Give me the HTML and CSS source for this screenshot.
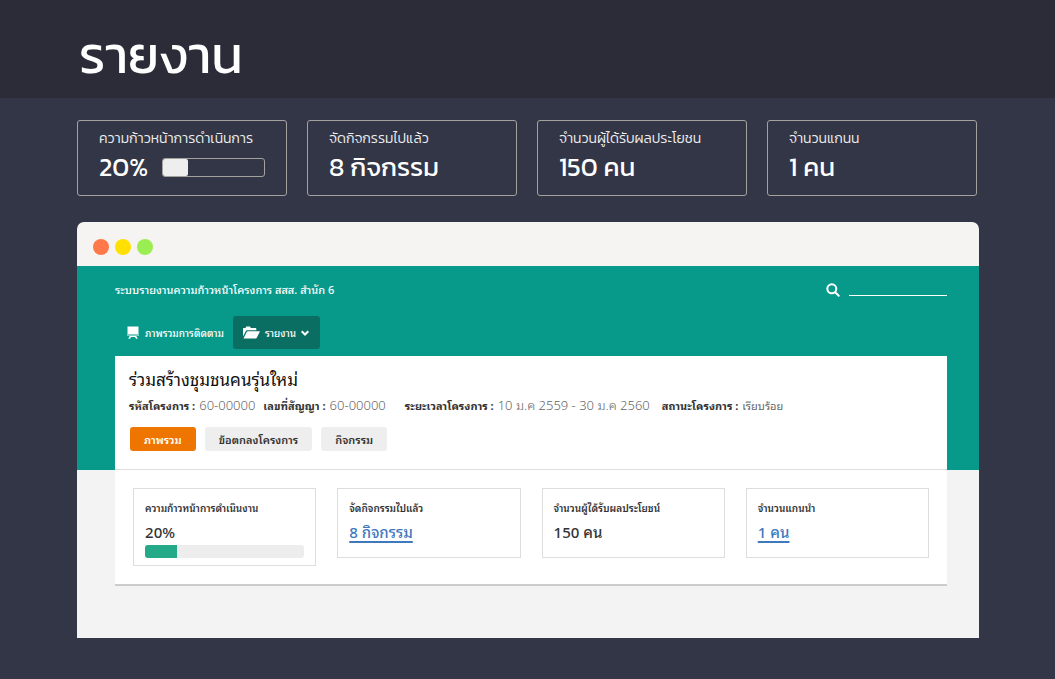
FILE: index.html
```html
<!DOCTYPE html>
<html lang="th">
<head>
<meta charset="utf-8">
<meta name="viewport" content="width=device-width, initial-scale=1">
<title>รายงาน</title>
<link rel="stylesheet" href="styles.css">
</head>
<body>
<header class="page-header"><h1 class="page-title">รายงาน</h1></header>
<main class="page-main">
  <section class="stats">
    <article class="stat">
      <h2 class="stat-label">ความก้าวหน้าการดำเนินการ</h2>
      <div class="stat-row">
        <p class="stat-value">20%</p>
        <div class="meter" role="progressbar" aria-label="ความก้าวหน้า" aria-valuenow="20" aria-valuemin="0" aria-valuemax="100"><div class="meter-fill"></div></div>
      </div>
    </article>
    <article class="stat">
      <h2 class="stat-label">จัดกิจกรรมไปแล้ว</h2>
      <p class="stat-value">8 กิจกรรม</p>
    </article>
    <article class="stat">
      <h2 class="stat-label">จำนวนผู้ได้รับผลประโยชน</h2>
      <p class="stat-value">150 คน</p>
    </article>
    <article class="stat">
      <h2 class="stat-label">จำนวนแกนน</h2>
      <p class="stat-value">1 คน</p>
    </article>
  </section>

  <section class="window">
    <div class="window-bar">
      <span class="dot dot-red"></span><span class="dot dot-yellow"></span><span class="dot dot-green"></span>
    </div>
    <div class="app-top">
      <div class="app-bar">
        <p class="app-name">ระบบรายงานความก้าวหน้าโครงการ สสส. สำนัก 6</p>
        <label class="search">
          <svg class="search-icon" viewBox="0 0 14 14" aria-hidden="true"><circle cx="5.8" cy="5.8" r="4.5"/><path d="M9.2 9.2 12.7 12.7"/></svg>
          <input class="search-input" type="search" aria-label="ค้นหา">
        </label>
      </div>
      <nav class="nav">
        <a class="nav-link" href="#">
          <svg class="icon-board" viewBox="0 0 12 13" aria-hidden="true"><path d="M.5 .5h11v7.500H.5zM0 8.600h12v1H0zM2.500 10h7v1h-7zM2.500 10.500H4.300L3 12.800H1.200zM7.700 10.500h1.800l1.300 2.300H9z"/></svg>
          <span>ภาพรวมการติดตาม</span>
        </a>
        <button class="nav-button" type="button">
          <svg class="icon-folder" viewBox="0 0 17 13" aria-hidden="true"><path d="M0 10.500V2.800Q0 2 .8 2H2.500L3.300.6H7L7.800 2h4.700q.8 0 .8.8v1.400H4.200Q3.300 4.200 2.900 5zM.5 12.500 3.700 5.900Q4 5.200 4.800 5.200H17l-3.200 6.500q-.4.8-1.200.8z"/></svg>
          <span>รายงาน</span>
          <svg class="icon-chevron" viewBox="0 0 8 6" aria-hidden="true"><path d="M.7 1.200 4 4.500 7.300 1.200"/></svg>
        </button>
      </nav>
      <div class="project-head">
        <h2 class="project-title">ร่วมสร้างชุมชนคนรุ่นใหม่</h2>
        <dl class="meta">
          <div class="meta-item"><dt>รหัสโครงการ :</dt><dd>60-00000</dd></div>
          <div class="meta-item meta-wide"><dt>เลขที่สัญญา :</dt><dd>60-00000</dd></div>
          <div class="meta-item"><dt>ระยะเวลาโครงการ :</dt><dd>10 ม.ค 2559 - 30 ม.ค 2560</dd></div>
          <div class="meta-item meta-status"><dt>สถานะโครงการ :</dt><dd>เรียบร้อย</dd></div>
        </dl>
        <div class="tabs">
          <button class="tab tab-active" type="button">ภาพรวม</button>
          <button class="tab" type="button">ข้อตกลงโครงการ</button>
          <button class="tab" type="button">กิจกรรม</button>
        </div>
      </div>
    </div>
    <div class="app-body">
      <div class="project-body">
        <article class="box">
          <h3 class="box-label">ความก้าวหน้าการดำเนินงาน</h3>
          <p class="box-value">20%</p>
          <div class="progress" role="progressbar" aria-label="ความก้าวหน้า" aria-valuenow="20" aria-valuemin="0" aria-valuemax="100"><div class="progress-fill"></div></div>
        </article>
        <article class="box">
          <h3 class="box-label">จัดกิจกรรมไปแล้ว</h3>
          <p class="box-value"><a class="box-link" href="#">8 กิจกรรม</a></p>
        </article>
        <article class="box">
          <h3 class="box-label">จำนวนผู้ได้รับผลประโยชน์</h3>
          <p class="box-value">150 คน</p>
        </article>
        <article class="box">
          <h3 class="box-label">จำนวนแกนนำ</h3>
          <p class="box-value"><a class="box-link" href="#">1 คน</a></p>
        </article>
      </div>
    </div>
  </section>
</main>
</body>
</html>
```
FILE: styles.css
```css
* { box-sizing: border-box; }
body {
  margin: 0;
  background: #333647;
  color: #fff;
  font-family: Kanit, "Noto Sans Thai", "Noto Sans", sans-serif;
}
h1, h2, h3, p, dl, dd { margin: 0; font-weight: 400; }
button { border: 0; font: inherit; cursor: pointer; }
.page-header { background: #2b2c37; padding: 23px 79px 11px; }
.page-title { font-size: 52px; line-height: 64px; }
.page-main { padding: 22px 76px 41px 77px; }
.stats { display: grid; grid-template-columns: repeat(4, 1fr); gap: 20px; margin-right: 2px; }
.stat { min-height: 76px; padding: 5px 21px; border: 1px solid #a3a29f; border-radius: 3px; white-space: nowrap; }
.stat-label { font-size: 14px; line-height: 26px; font-weight: 300; color: #eee; }
.stat-value { font-size: 26px; line-height: 30px; }
.stat-row { display: flex; align-items: center; gap: 14px; }
.meter { flex: 1; height: 19px; border: 1px solid #a3a29f; border-radius: 3px; }
.meter-fill { width: 25%; height: 100%; background: #eee; border-radius: 2px; }

.window { margin-top: 26px; border-radius: 7px 7px 0 0; overflow: hidden; font-family: "Noto Sans Thai Looped", Loma, "Noto Sans", sans-serif; }
.window-bar { display: flex; align-items: center; gap: 6px; height: 44px; padding: 5px 16px 0; background: #f6f4f2; }
.dot { width: 16px; height: 16px; border-radius: 50%; }
.dot-red { background: #ff7849; }
.dot-yellow { background: #ffe000; }
.dot-green { background: #9bee52; }

.app-top { padding: 12px 32px 0 38px; background: #07998a; }
.app-bar { display: flex; justify-content: space-between; align-items: center; min-height: 24px; }
.app-name { padding-bottom: 3px; font-size: 11px; line-height: 20px; font-weight: 500; }
.search { display: flex; align-items: center; gap: 9px; }
.search-icon { width: 14px; height: 14px; fill: none; stroke: #fff; stroke-width: 2; stroke-linecap: round; }
.search-input { width: 98px; height: 12px; padding: 0; border: 0; border-bottom: 1px solid #fff; background: transparent; color: #fff; font-size: 10px; outline: 0; }
.nav { display: flex; align-items: center; gap: 9px; padding: 14px 0 7px 12px; }
.nav-link { display: flex; align-items: center; gap: 6px; color: #fff; font-size: 10px; font-weight: 500; text-decoration: none; }
.nav-button { display: flex; align-items: center; gap: 5px; height: 33px; padding: 0 11px 0 10px; border-radius: 3px; background: #0a6e63; color: #fff; font-size: 10px; font-weight: 500; }
.icon-board { width: 12px; height: 13px; fill: #fff; }
.icon-folder { width: 17px; height: 13px; fill: #fff; }
.icon-chevron { width: 8px; height: 6px; fill: none; stroke: #fff; stroke-width: 2; }

.project-head { padding: 9px 14px 18px; background: #fff; border-bottom: 1px solid #ddd; color: #111; }
.project-title { font-size: 17px; line-height: 28px; }
.meta { display: flex; flex-wrap: wrap; gap: 0 8px; font-size: 13px; line-height: 24px; }
.meta-item { display: flex; gap: 4px; }
.meta-wide { margin-right: 11px; }
.meta dt { font-size: 11px; font-weight: 700; color: #333; }
.meta dd { font-weight: 300; color: #666; }
.meta-status { margin-left: 4px; font-size: 11px; }
.meta-status dd { font-weight: 400; }
.tabs { display: flex; gap: 9px; margin-top: 10px; padding-left: 1px; }
.tab { height: 24px; padding: 0 14px; border-radius: 3px; background: #eee; color: #333; font-size: 11px; font-weight: 600; }
.tab-active { background: #ee7600; color: #fff; }

.app-body { padding: 0 32px 52px 38px; background: #f3f3f3; }
.project-body { display: grid; grid-template-columns: repeat(4, 1fr); align-items: start; gap: 21px; padding: 18px; background: #fff; border-bottom: 2px solid #ccc; }
.box { min-height: 70px; padding: 8px 11px 7px; border: 1px solid #ddd; color: #333; white-space: nowrap; }
.box-label { font-size: 10px; line-height: 22px; font-weight: 600; }
.box-value { padding-bottom: 2px; font-size: 15px; line-height: 24px; font-weight: 500; }
.box-link { color: #4078bd; text-underline-offset: 3px; text-decoration-thickness: 2px; text-decoration-skip-ink: none; }
.progress { height: 13px; border-radius: 3px; background: #ededed; overflow: hidden; }
.progress-fill { width: 20%; height: 100%; background: #24aa89; }
```
